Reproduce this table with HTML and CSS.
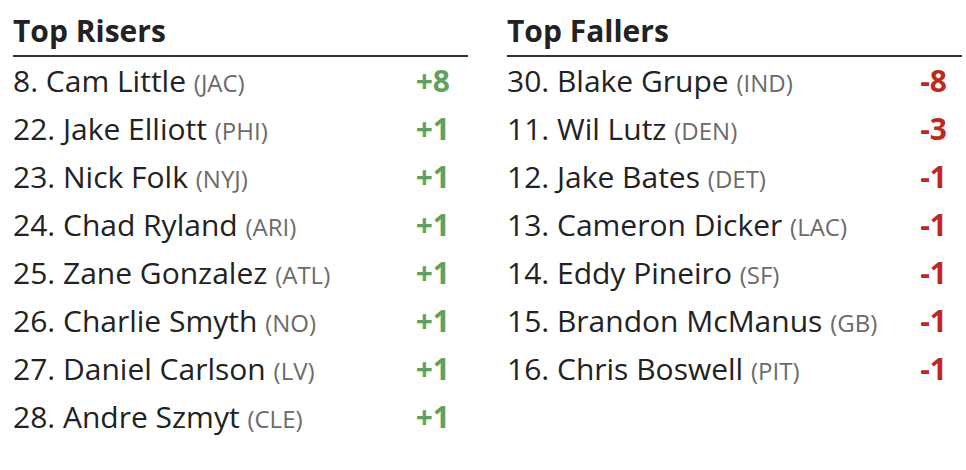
FILE: index.html
```html
<!DOCTYPE html>
<html lang="en">
<head>
    <meta charset="UTF-8">
    <title>Kicker Rank Movers</title>
    <link rel="stylesheet" href="styles.css">
</head>
<body>
<div class="movers">
    <!-- Top Risers -->
    <div class="mover-col">
        <h2 class="mover-title">Top Risers</h2>
        <ul class="mover-list">
            <li><span class="name">8. Cam Little <span class="team">(JAC)</span></span><span class="change up">+8</span></li>
            <li><span class="name">22. Jake Elliott <span class="team">(PHI)</span></span><span class="change up">+1</span></li>
            <li><span class="name">23. Nick Folk <span class="team">(NYJ)</span></span><span class="change up">+1</span></li>
            <li><span class="name">24. Chad Ryland <span class="team">(ARI)</span></span><span class="change up">+1</span></li>
            <li><span class="name">25. Zane Gonzalez <span class="team">(ATL)</span></span><span class="change up">+1</span></li>
            <li><span class="name">26. Charlie Smyth <span class="team">(NO)</span></span><span class="change up">+1</span></li>
            <li><span class="name">27. Daniel Carlson <span class="team">(LV)</span></span><span class="change up">+1</span></li>
            <li><span class="name">28. Andre Szmyt <span class="team">(CLE)</span></span><span class="change up">+1</span></li>
        </ul>
    </div>

    <!-- Top Fallers -->
    <div class="mover-col fallers">
        <h2 class="mover-title">Top Fallers</h2>
        <ul class="mover-list">
            <li><span class="name">30. Blake Grupe <span class="team">(IND)</span></span><span class="change down">-8</span></li>
            <li><span class="name">11. Wil Lutz <span class="team">(DEN)</span></span><span class="change down">-3</span></li>
            <li><span class="name">12. Jake Bates <span class="team">(DET)</span></span><span class="change down">-1</span></li>
            <li><span class="name">13. Cameron Dicker <span class="team">(LAC)</span></span><span class="change down">-1</span></li>
            <li><span class="name">14. Eddy Pineiro <span class="team">(SF)</span></span><span class="change down">-1</span></li>
            <li><span class="name">15. Brandon McManus <span class="team">(GB)</span></span><span class="change down">-1</span></li>
            <li><span class="name">16. Chris Boswell <span class="team">(PIT)</span></span><span class="change down">-1</span></li>
        </ul>
    </div>
</div>
</body>
</html>
```

FILE: styles.css
```css
body {
    margin: 0;
    padding: 12px 4px 0 13px;
    font-family: "Open Sans", Arial, sans-serif;
    color: #222;
    background: #fff;
}

.movers {
    display: flex;
    gap: 39px;
}

.mover-col {
    flex: 1;
}

.mover-title {
    margin: 0;
    font-size: 30px;
    font-weight: 700;
    line-height: 38px;
    padding-bottom: 5px;
    border-bottom: 2px solid #333;
}

.mover-list {
    list-style: none;
    margin: 0;
    padding: 0;
}

.mover-list li {
    display: flex;
    justify-content: space-between;
    align-items: baseline;
    height: 48px;
    line-height: 48px;
    padding-right: 18px;
    font-size: 30px;
}

.fallers .mover-list li {
    padding-right: 15px;
}

.team {
    font-size: 24px;
    color: #6b6b6b;
}

.change {
    font-weight: 700;
}

.change.up {
    color: #5ea35a;
}

.change.down {
    color: #c1271d;
}
```
